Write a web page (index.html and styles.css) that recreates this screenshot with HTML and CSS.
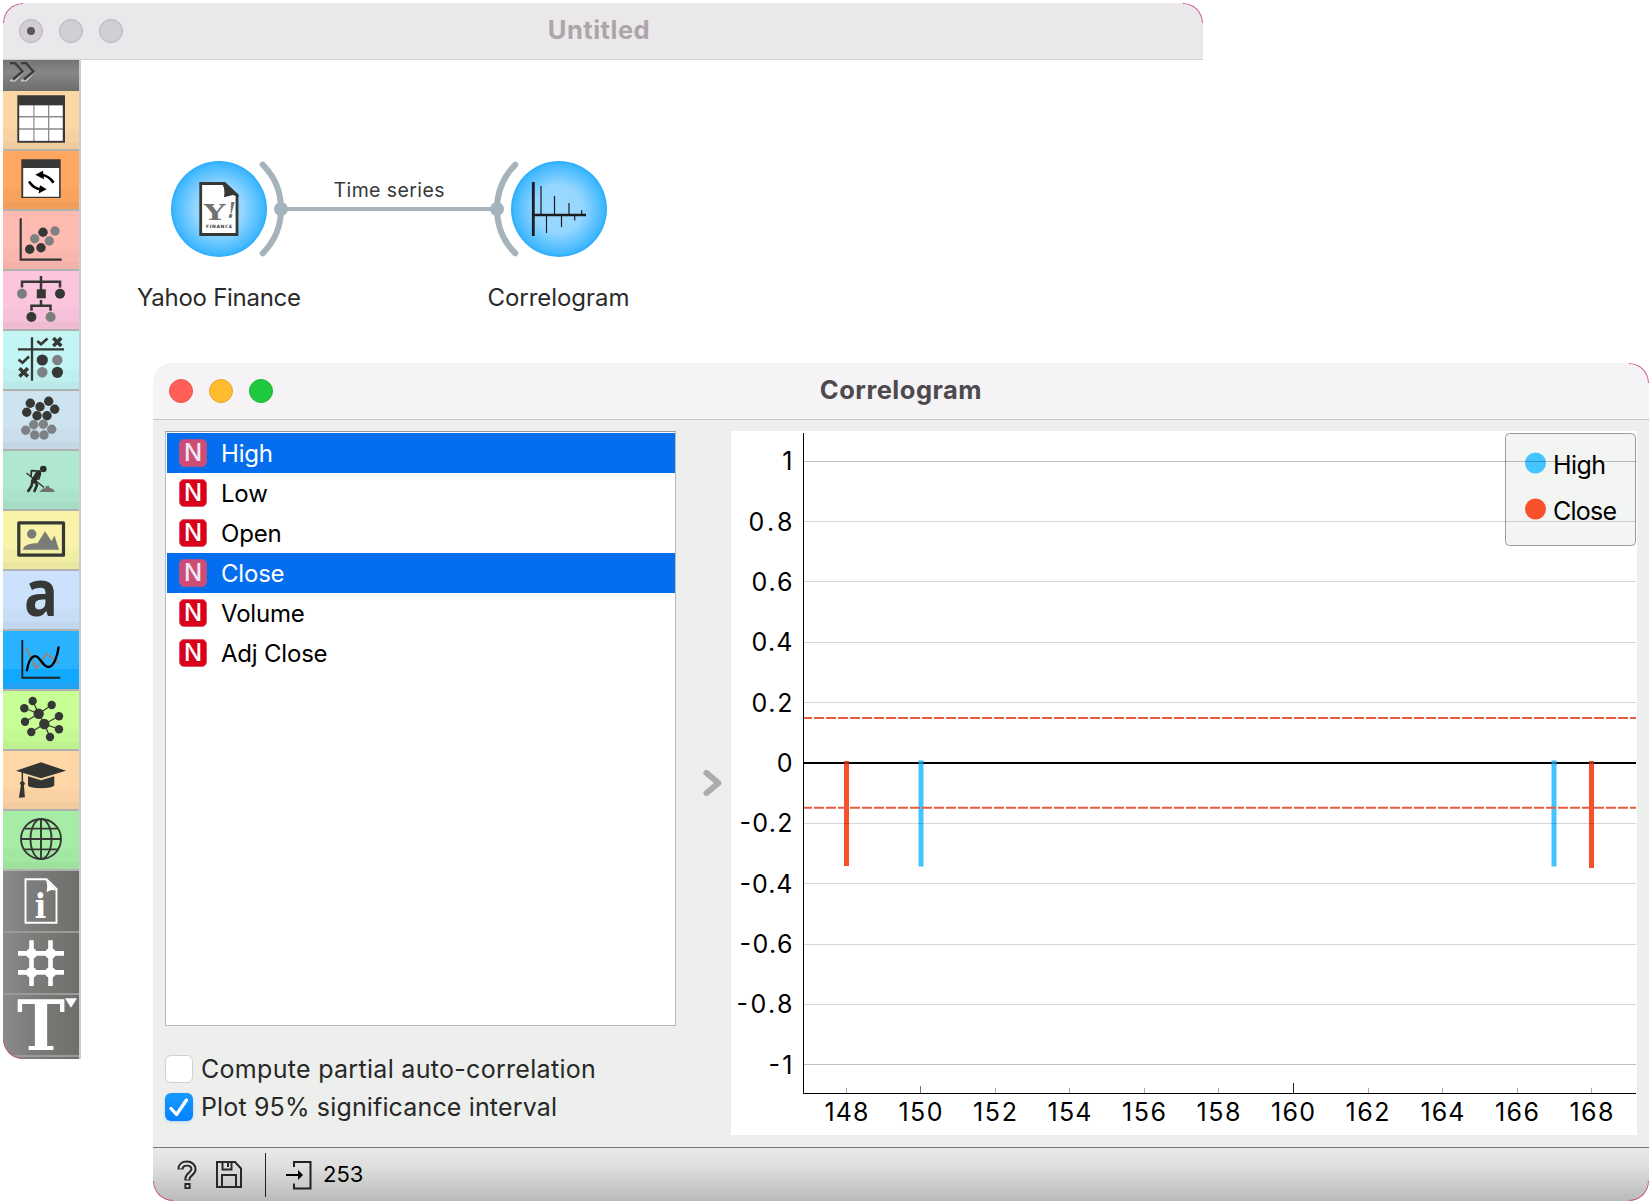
FILE: index.html
```html
<!DOCTYPE html>
<html lang="en">
<head>
<meta charset="utf-8">
<title>Untitled</title>
<link rel="stylesheet" href="styles.css">
</head>
<body>
<div class="desktop">
  <section class="window main-window">
    <i class="corner tl"></i><i class="corner tr"></i>
    <header class="titlebar inactive">
      <span class="light dotted"></span><span class="light"></span><span class="light"></span>
      <h1 class="title">Untitled</h1>
    </header>
    <div class="main-body">
      <nav class="toolbar">
        <div class="expander"><svg width="30" height="20" viewBox="0 0 30 20" fill="none" stroke-width="2.400"><path d="M1 18.500H6L14.500 9.500M12 18.500H17L25.500 9.500" stroke="#c4c6c4" stroke-width="2"/><path d="M1 1H6L13.500 9.500 4 17.500M12 1H17L24.500 9.500 15 17.500" stroke="#3c3e3c"/></svg></div>
        <div class="tile data"><svg viewBox="0 0 76 58"><path fill="#383936" d="M14.300 4.300H62V51.700H14.300z"/><path fill="#8b8d89" d="M16.300 14.300h43.400v35.500H16.300z"/><path fill="#fff" d="M16.300 14.500h14v10.500h-14zM31.500 14.500H45v10.500H31.500zM46.300 14.500h13.400v10.500H46.300zM16.300 26.600h14v10.600h-14zM31.500 26.600H45v10.600H31.500zM46.300 26.600h13.400v10.600H46.300zM16.300 38.700h14v11h-14zM31.500 38.700H45v11H31.500zM46.300 38.700h13.400v11H46.300z"/></svg></div>
        <div class="tile transform"><svg viewBox="0 0 76 58"><path fill="#383936" d="M18.300 8.300h39.400V47H18.300z"/><path fill="#fff" d="M20.200 17h35.900v28.800H20.200z"/><path d="M50.500 31.800Q46 24.500 38.500 24M26 30.500Q31 38 38 38.300" stroke="#000" stroke-width="2.600" fill="none"/><path d="M32.300 23.700 40 19.800 41 28.200zM43.700 38.300 35.500 42.500 37 34.300z"/></svg></div>
        <div class="tile visualize"><svg viewBox="0 0 76 58"><path d="M17.700 7.300V48.700H58.700" fill="none" stroke="#333" stroke-width="2.200"/><g fill="#7f8285"><circle cx="52" cy="20" r="4.700"/><circle cx="31.700" cy="27.700" r="4.700"/><circle cx="46.300" cy="30" r="4.700"/></g><g fill="#363835"><circle cx="40" cy="21.300" r="4.700"/><circle cx="26.700" cy="38.300" r="4.700"/><circle cx="38" cy="36.700" r="4.700"/></g></svg></div>
        <div class="tile model"><svg viewBox="0 0 76 58"><path d="M38 5V19M19 16.500V10.700H57V16.500M38 29V34.700M28.500 39.700V34.700H47.500V39.700" fill="none" stroke="#363835" stroke-width="2.500"/><circle cx="19" cy="22.700" r="5" fill="#7c7e7b"/><circle cx="47.600" cy="46" r="5" fill="#7c7e7b"/><path d="M33.800 18.300h9v9h-9z" fill="#363835"/><circle cx="57" cy="22.700" r="5" fill="#363835"/><circle cx="28.400" cy="46" r="5" fill="#363835"/></svg></div>
        <div class="tile evaluate"><svg viewBox="0 0 76 58"><g fill="none" stroke="#363835"><path d="M29 6.300V49.700M15 18.400H61" stroke-width="2.300"/><path d="M34.300 10 38 13.300 44.500 7.500M15.500 28.500 19.500 31.700 26 25.500" stroke-width="2.600"/><path d="M50.300 7 58.300 15M58.300 7 50.300 15M16.500 37.200 24.900 45.500M24.900 37.200 16.500 45.500" stroke-width="3.600"/></g><circle cx="39.300" cy="29" r="5.600" fill="#363835"/><circle cx="54.400" cy="41.300" r="5.600" fill="#363835"/><circle cx="54.400" cy="29" r="5.200" fill="#7f8285"/><circle cx="39.300" cy="41.300" r="5.200" fill="#7f8285"/></svg></div>
        <div class="tile unsupervised"><svg viewBox="0 0 76 58"><g fill="#363835"><circle cx="27.300" cy="12.300" r="4.700"/><circle cx="37" cy="15.700" r="4.700"/><circle cx="45.700" cy="10.300" r="4.700"/><circle cx="51.700" cy="18.300" r="4.700"/><circle cx="23.700" cy="21.300" r="4.700"/><circle cx="34" cy="24.700" r="4.700"/><circle cx="44" cy="24.700" r="4.700"/></g><g fill="#7f8285"><circle cx="30.700" cy="33.700" r="4.700"/><circle cx="40.300" cy="33.300" r="4.700"/><circle cx="22.700" cy="39.300" r="4.700"/><circle cx="48.700" cy="38.300" r="4.700"/><circle cx="31.700" cy="44" r="4.700"/><circle cx="41" cy="44" r="4.700"/></g></svg></div>
        <div class="tile prototypes"><svg viewBox="0 0 76 58"><circle cx="40.300" cy="18" r="3.300" fill="#2c2e2b"/><path d="M23.500 22 41 36.500" stroke="#2c2e2b" stroke-width="1.300"/><g fill="none" stroke="#2c2e2b" stroke-linecap="round" stroke-linejoin="round"><path d="M35.500 21.500 30.500 30" stroke-width="5"/><path d="M33 19.800 28.500 19.600 28 25" stroke-width="1.800"/><path d="M29.500 30 28.500 35 25.300 40M31.500 30 34 34 31.500 40" stroke-width="2.600"/><path d="M37.500 22.500 36 28 31.500 28" stroke-width="1.600"/></g><path d="M36.300 41 40 37.200 42 37.600 43 35 45.700 34.700 47 37 50 38 52 41z" fill="#70736f"/></svg></div>
        <div class="tile image"><svg viewBox="0 0 76 58"><path d="M15.800 11.800H60.500V44.200H15.800z" fill="none" stroke="#363835" stroke-width="3.200" stroke-linejoin="round"/><circle cx="28.700" cy="23" r="4.700" fill="#797c77"/><path d="M20 38.800Q20.500 35 25 33.500L31 32.300 34.500 32.300 42 20.300 48.500 30 51.500 24.500 56 38.800z" fill="#797c77"/></svg></div>
        <div class="tile text"><svg viewBox="0 0 76 58"><text x="21" y="45" class="letter-a" textLength="34" lengthAdjust="spacingAndGlyphs">a</text></svg></div>
        <div class="tile series"><svg viewBox="0 0 76 58" fill="none"><path d="M19.300 9V46.700H57.300" stroke="#1d2226" stroke-width="1.900"/><path d="M23.300 17.300 33.300 37.300 43.700 22.700 56 32.300" stroke="#8a8a8a" stroke-width="2.200"/><path d="M23.700 40.200C25.500 30 29 25 32.500 25.200C37 25.500 40 36 45.300 36C51 36 54.500 25 55.700 15.500" stroke="#000" stroke-width="2.300"/></svg></div>
        <div class="tile network"><svg viewBox="0 0 76 58" fill="#363835"><path d="M29.700 10 35.700 22.700 21.300 17.300M48.700 14 35.700 22.700 22 30.700M35.700 22.700 41.300 33 56 25.300M28.300 41 41.300 33 56 38.300M41.300 33 47 46" fill="none" stroke="#363835" stroke-width="1.200"/><circle cx="35.700" cy="22.700" r="5.200"/><circle cx="41.300" cy="33" r="5.200"/><circle cx="29.700" cy="10" r="4.200"/><circle cx="21.300" cy="17.300" r="4.200"/><circle cx="48.700" cy="14" r="4.200"/><circle cx="22" cy="30.700" r="4.200"/><circle cx="56" cy="25.300" r="4.200"/><circle cx="28.300" cy="41" r="4.200"/><circle cx="56" cy="38.300" r="4.200"/><circle cx="47" cy="46" r="4.200"/></svg></div>
        <div class="tile education"><svg viewBox="0 0 76 58" fill="#333532"><path d="M13 19.800 38 11.300 63 19.800 38 27.200z"/><path d="M25 25.300 38 29.300 51.300 25.300V34.500Q49 37.200 38 37.200T25 34.500z"/><path d="M18.600 21h1.500v9l2 2.500-1.200 2 1 11.700-6 .5 2-12.500-1.200-2 1.900-2.500z"/></svg></div>
        <div class="tile geo"><svg viewBox="0 0 76 58" fill="none" stroke="#363835" stroke-width="1.900"><circle cx="38" cy="28" r="20"/><ellipse cx="38" cy="28" rx="10.500" ry="20"/><path d="M38 8V48M18 28H58M21.500 17.600H54.500M21.500 38.400H54.500"/></svg></div>
        <div class="tool"><svg viewBox="0 0 76 60"><path d="M22.500 8.200H43.500L53.500 18V51.800H22.500z" fill="none" stroke="#fff" stroke-width="1.900"/><path d="M42 8 53.500 19.500 48.500 19 43.500 21Q45.500 13 42 8z" fill="#fff"/><text x="31.800" y="46.800" class="letter-i" textLength="11.500" lengthAdjust="spacingAndGlyphs">i</text></svg></div>
        <div class="tool"><svg viewBox="0 0 76 60" fill="#fff"><path d="M28.500 7.300V53M47.500 7.300V53M15 20.400H61M15 39.400H61" stroke="#fff" stroke-width="4.600"/><circle cx="28.500" cy="20.400" r="5.400"/><circle cx="47.500" cy="20.400" r="5.400"/><circle cx="28.500" cy="39.400" r="5.400"/><circle cx="47.500" cy="39.400" r="5.400"/></svg></div>
        <div class="tool"><svg viewBox="0 0 76 60" fill="#fff"><text x="14" y="55" class="letter-t" textLength="48" lengthAdjust="spacingAndGlyphs">T</text><path d="M62 3.300H74L68 12.700z"/></svg></div>
      </nav>
      <div class="canvas">
        <svg width="600" height="280" viewBox="81 60 600 280">
          <defs><radialGradient id="node"><stop offset="0" stop-color="#9fdaff"/><stop offset=".5" stop-color="#94d6ff"/><stop offset=".93" stop-color="#41b8ff"/><stop offset="1" stop-color="#2aacfb"/></radialGradient></defs>
          <circle cx="219" cy="209" r="48" fill="url(#node)"/><circle cx="559" cy="209" r="48" fill="url(#node)"/>
          <g fill="none" stroke="#a5b4bc" stroke-linecap="round"><path d="M262.700 164.700A62.800 62.800 0 0 1 262.700 253.300M515.300 164.700A62.800 62.800 0 0 0 515.300 253.300" stroke-width="6"/><path d="M281 209H497" stroke-width="4"/></g>
          <circle cx="281" cy="209" r="7" fill="#a5b4bc"/><circle cx="497" cy="209" r="7" fill="#a5b4bc"/>
          <path d="M200.700 183.500H224L237 195.500V234.500H200.700z" fill="#fff" stroke="#363835" stroke-width="2.800"/>
          <path d="M223.300 182H225L238.500 194.500V197L233 195 224 197.200Q225.500 188 222 184z" fill="#363835"/>
          <text x="204" y="220.300" class="yahoo" textLength="21.500" lengthAdjust="spacingAndGlyphs">Y</text>
          <text x="227.500" y="218.300" class="yahoo bang" textLength="8" lengthAdjust="spacingAndGlyphs">!</text>
          <text x="206" y="228" class="finance" textLength="26">FINANCE</text>
          <g fill="none" stroke="#1c1c1c"><path d="M533.300 182V236" stroke-width="2.800"/><path d="M533 215H586" stroke-width="2.400"/><path d="M541 186V215M554.500 196V215M569 203V215M581.700 210V215M546.500 215V233M561.500 215V227M574.700 215V220.500" stroke-width="1.200"/></g>
          <g class="node-text" text-anchor="middle"><text x="389" y="196.500" class="link-label" textLength="111">Time series</text><text x="219" y="305.500" textLength="164">Yahoo Finance</text><text x="558.500" y="305.500" textLength="142">Correlogram</text></g>
        </svg>
      </div>
    </div>
    <i class="corner bl"></i>
  </section>

  <section class="window dialog">
    <i class="corner tr"></i><i class="corner bl"></i><i class="corner br"></i>
    <header class="titlebar active">
      <span class="light red"></span><span class="light yellow"></span><span class="light green"></span>
      <h2 class="title">Correlogram</h2>
    </header>
    <div class="dialog-body">
      <div class="controls">
        <ul class="variables">
          <li class="selected"><b>N</b>High</li>
          <li><b>N</b>Low</li>
          <li><b>N</b>Open</li>
          <li class="selected"><b>N</b>Close</li>
          <li><b>N</b>Volume</li>
          <li><b>N</b>Adj Close</li>
        </ul>
        <div class="options">
          <div class="option"><span class="box"></span><span class="compute">Compute partial auto-correlation</span></div>
          <div class="option"><span class="box checked"><svg width="28" height="28" viewBox="0 0 28 28" fill="none" stroke="#fff" stroke-width="3.300" stroke-linecap="round" stroke-linejoin="round"><path d="M6 15.500 11.500 21.500 21.500 7"/></svg></span><span class="interval">Plot 95% significance interval</span></div>
        </div>
      </div>
      <div class="splitter"><svg width="20" height="28" viewBox="0 0 20 28" fill="none" stroke="#abadaa" stroke-width="6" stroke-linecap="round" stroke-linejoin="round"><path d="M3.500 4 15.500 14 3.500 24"/></svg></div>
      <svg class="plot" width="906" height="704" viewBox="731 431 906 704">
        <rect x="1505.500" y="433.500" width="130" height="112" rx="4" fill="#f3f5f3" stroke="#999b99"/>
        <circle cx="1535.500" cy="463" r="10.500" fill="#45c5ff"/><circle cx="1535.500" cy="509" r="10.500" fill="#f7502b"/>
        <g class="plot-text"><text x="1553" y="474" textLength="53">High</text><text x="1553" y="520" textLength="64">Close</text></g>
        <g fill="#f7502b"><path d="M844 761h5v105h-5zM1589 761h5v107h-5z"/></g>
        <g fill="#45c5ff"><path d="M918.500 760.500h5v106h-5zM1551.500 760.500h5v106h-5z"/></g>
        <path d="M804 521.500H1636M804 581.500H1636M804 642.500H1636M804 702.500H1636M804 823.500H1636M804 883.500H1636M804 944.500H1636M804 1004.500H1636" stroke="#000" stroke-opacity=".16"/>
        <path d="M804 461.500H1636M804 1064.500H1636" stroke="#000" stroke-opacity=".25"/>
        <path d="M804 763H1636" stroke="#000" stroke-width="2"/>
        <path d="M844 761h5v5h-5zM1589 761h5v5h-5z" fill="#f7502b" fill-opacity=".6"/>
        <path d="M918.500 760.500h5v5h-5zM1551.500 760.500h5v5h-5z" fill="#45c5ff" fill-opacity=".6"/>
        <path d="M804 718H1636M804 807.700H1636" stroke="#e95b40" stroke-width="1.900" stroke-dasharray="10 2" stroke-dashoffset="2"/>
        <path d="M846.500 1088v5M995.500 1088v5M1069.500 1088v5M1144.500 1088v5M1218.500 1088v5M1368.500 1088v5M1442.500 1088v5M1517.500 1088v5M1591.500 1088v5" stroke="#aaa"/>
        <path d="M920.500 1086v7" stroke="#777"/><path d="M1293.500 1083v10" stroke="#222"/>
        <path d="M803.500 433V1093.500H1636" fill="none" stroke="#000"/>
        <g class="plot-text" text-anchor="end"><text x="792.500" y="470">1</text><text x="792.500" y="531" textLength="44">0.8</text><text x="792.500" y="591" textLength="41">0.6</text><text x="792.500" y="651" textLength="41">0.4</text><text x="792.500" y="712" textLength="41">0.2</text><text x="792.500" y="772">0</text><text x="792.500" y="832" textLength="53">-0.2</text><text x="792.500" y="893" textLength="53">-0.4</text><text x="792.500" y="953" textLength="53">-0.6</text><text x="792.500" y="1013" textLength="56">-0.8</text><text x="792.500" y="1074" textLength="24">-1</text></g>
        <g class="plot-text" text-anchor="middle"><text x="846.500" y="1121" textLength="44">148</text><text x="920.500" y="1121" textLength="44">150</text><text x="995" y="1121" textLength="44">152</text><text x="1069.500" y="1121" textLength="44">154</text><text x="1144" y="1121" textLength="44">156</text><text x="1218.500" y="1121" textLength="44">158</text><text x="1293" y="1121" textLength="44">160</text><text x="1367.500" y="1121" textLength="44">162</text><text x="1442.500" y="1121" textLength="44">164</text><text x="1517" y="1121" textLength="44">166</text><text x="1591.500" y="1121" textLength="44">168</text></g>
      </svg>
    </div>
    <footer class="statusbar">
      <svg width="20" height="30" viewBox="0 0 20 30" fill="none"><path d="M3.500 9.500C3.500 5.500 6 3.500 10 3.500S16.500 6 16.500 9.300C16.500 13.500 10.500 14.500 10.500 18.500V20.500M10.500 23V29" stroke="#2b2827" stroke-width="6.200"/><path d="M3.500 8.500C3.700 5.300 6.300 3.600 10 3.600S16.500 6 16.500 9.300C16.500 13.500 10.500 14.500 10.500 18.500V19.500M10.500 25V27.300" stroke="#dcdedc" stroke-width="2.200"/></svg>
      <svg class="save" width="26" height="27" viewBox="0 0 26 27" fill="none" stroke="#2b2827" stroke-width="2"><path d="M1 1H19L25 7.500V26H1zM6.500 1V8.500H15.500V1M6 26V14H20V26M12 2V6"/></svg>
      <span class="divider"></span>
      <svg class="input" width="26" height="30" viewBox="0 0 26 30" fill="none" stroke="#221f1e" stroke-width="2"><path d="M8 7V2H24.500V28.500H8V23.500"/><path d="M0 15H13" stroke="#000"/><path d="M12 10 17 15 12 20z" fill="#000" stroke="none"/></svg>
      <span class="count">253</span>
    </footer>
  </section>
</div>
</body>
</html>
```
FILE: styles.css
```css
* { box-sizing: border-box; }
body { margin: 0; background: #fff; font-family: Inter, "Liberation Sans", sans-serif; }
.desktop { position: relative; width: 1652px; height: 1204px; overflow: hidden; }
.window { position: absolute; }
.main-window { left: 3px; top: 3px; width: 1200px; height: 1056px; border-radius: 20px 20px 0 20px; overflow: hidden; }
.dialog { left: 153px; top: 363px; width: 1496px; height: 838px; border-radius: 20px; overflow: hidden; background: #edefec; }

.corner { position: absolute; width: 20px; height: 20px; z-index: 1; border: 0 solid #cf5596; }
.tl { left: 0; top: 0; border-width: 1px 0 0 1px; border-top-left-radius: 20px; }
.tr { right: 0; top: 0; border-width: 1px 1px 0 0; border-top-right-radius: 20px; }
.bl { left: 0; bottom: 0; border-width: 0 0 1px 1px; border-bottom-left-radius: 20px; }
.br { right: 0; bottom: 0; border-width: 0 1px 1px 0; border-bottom-right-radius: 20px; }

.titlebar { display: flex; align-items: center; gap: 16px; padding-left: 16px; height: 57px; }
.inactive { padding-bottom: 2px; background: #eae8eb; border-top: 1px solid #f2eaee; border-bottom: 1px solid #d0d1d2; }
.active { background: #f5f3f6; border-bottom: 1px solid #c3c4c3; }
.light { width: 24px; height: 24px; border-radius: 50%; border: 1px solid #b5b3b8; background: #d1cfd4; }
.dotted { display: grid; place-items: center; }
.dotted::after { content: ""; width: 8px; height: 8px; border-radius: 50%; background: #5f5457; }
.red { background: #ff5f57; border-color: #e9574f; }
.yellow { background: #febc2e; border-color: #e5a52a; }
.green { background: #1fc93f; border-color: #1bb438; }
.title { flex: 1; margin: 0; font-size: 25.500px; line-height: 30px; font-weight: 700; text-align: center; }
.inactive .title { color: #aea5a9; padding-right: 144px; margin-top: -1px; letter-spacing: .5px; }
.active .title { color: #4c4a4d; padding-right: 136px; margin-top: -2px; letter-spacing: .5px; }

.main-body { display: flex; height: 999px; }
.toolbar { width: 78px; border-right: 2px solid #c9cdd1; }
.toolbar svg { display: block; }
.expander { height: 31px; padding: 2px 0 0 6px; background: linear-gradient(#737572, #868885 40%, #6c6e6b); }
.tile { height: 60px; border-bottom: 2px solid #b0b2b0; background-image: linear-gradient(transparent 65%, rgba(0, 0, 0, .025) 65%, rgba(0, 0, 0, .025) 88%, rgba(0, 0, 0, .05) 88%); }
.tile svg { width: 76px; height: 58px; overflow: visible; }
.data { background-color: #fdd6a5; }
.transform { background-color: #ffa660; }
.visualize { background-color: #ffbab2; }
.model { background-color: #fbc5de; }
.evaluate { background-color: #c3f5f4; }
.unsupervised { background-color: #cee3f0; }
.prototypes { background-color: #afe8cf; }
.image { background-color: #f8f3a8; }
.text { background-color: #cce2fc; }
.series { background-color: #28b2ff; background-image: linear-gradient(transparent 65%, #11a8ff 65%, #11a8ff 90%, #22a2f0 90%); }
.network { background-color: #c7ff96; }
.education { background-color: #ffd6a6; }
.geo { background-color: #a5eda5; }
.tool { height: 62px; border-bottom: 2px solid #999b98; background: linear-gradient(90deg, #8a8c89, #7b7d7a 40%, #6d6f6b); }
.tool:last-child { height: 64px; border-bottom: 0; background: linear-gradient(#999b98, #999b98) 0 60px / 100% 2px no-repeat, linear-gradient(90deg, #8a8c89, #7b7d7a 40%, #6d6f6b); }
.tool svg { width: 76px; height: 60px; overflow: visible; }
.letter-a { font: 700 65px "Open Sans", sans-serif; fill: #363835; }
.letter-i { font: 700 33px "DejaVu Serif", serif; fill: #fff; }
.letter-t { font: 700 69px "DejaVu Serif", serif; fill: #fff; }

.canvas { flex: 1; background: #fff; }
.canvas svg { display: block; }
.node-text { font-size: 24px; fill: #2b2b2b; }
.link-label { font-size: 19.500px; fill: #383838; }
.yahoo { font: 700 22px "DejaVu Serif", serif; fill: #70736f; }
.bang { font-style: italic; }
.finance { font: 700 4.500px "DejaVu Sans", sans-serif; fill: #363835; }

.dialog-body { display: flex; height: 727px; padding: 11px 12px 12px; }
.controls { width: 511px; }
.variables { height: 595px; margin: 0; padding: 1px 0 0 1px; list-style: none; background: #fff; border: 1px solid #b8bab7; border-top-color: #989b98; }
.variables li { display: flex; align-items: center; gap: 14px; height: 40px; padding-left: 12px; font-size: 24px; letter-spacing: -.2px; color: #000; }
.variables b { display: grid; place-items: center; width: 28px; height: 28px; border-radius: 5px; background: #d80119; border: 1px solid #e2566a; color: #fff; font-size: 24px; line-height: 26px; font-weight: 500; }
.variables .selected { background: #056eee; color: #fff; }
.variables .selected b { background: #cd4d75; border-color: #ab5590; color: #efe9f6; }
.options { display: flex; flex-direction: column; gap: 10px; padding-top: 29px; }
.option { display: flex; align-items: center; gap: 8px; height: 28px; font-size: 25px; color: #272827; white-space: nowrap; }
.compute { letter-spacing: .3px; }
.interval { letter-spacing: .15px; }
.box { width: 28px; height: 28px; border-radius: 6px; background: #fff; border: 1px solid #cfd1ce; }
.checked { border: 0; background: linear-gradient(#159aff, #0582ff); box-shadow: 0 1px 3px #b5d3ef; }
.box svg { display: block; }
.splitter { width: 55px; display: flex; justify-content: center; padding: 338px 0 0 18px; }
.splitter svg { flex: none; }
.plot { display: block; background: #fff; }
.plot-text { font-size: 25px; fill: #000; }
.statusbar { display: flex; align-items: center; height: 54px; padding-left: 24px; border-top: 1px solid #777a77; background: linear-gradient(#e8eae8, #dddfdd 35%, #b9bbb8); }
.save { margin-left: 19px; }
.divider { width: 1px; height: 44px; margin: 0 20px 0 23px; background: #222; }
.count { margin: -1px 0 0 11px; font-size: 22px; color: #000; }
```
